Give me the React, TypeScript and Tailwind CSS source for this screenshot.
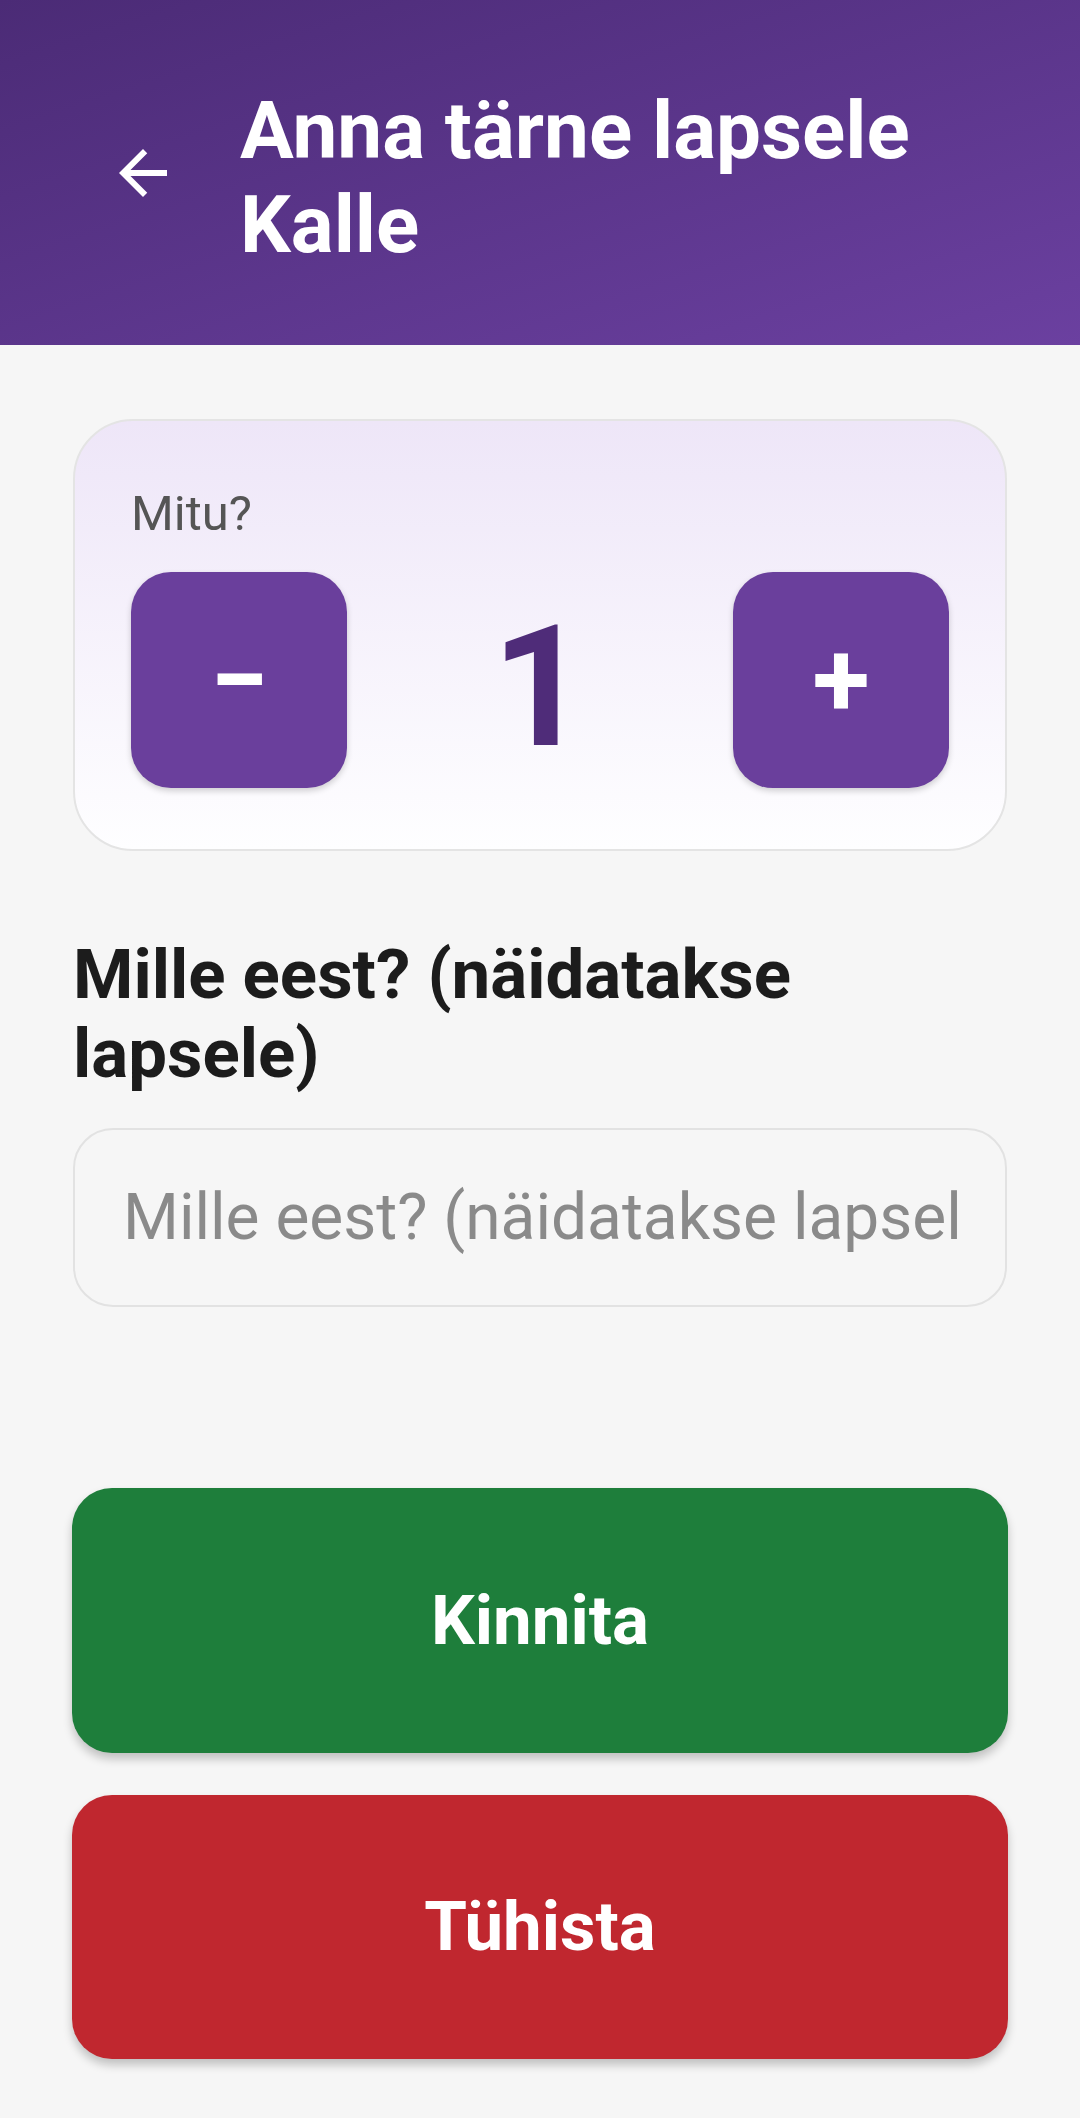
export default function App() {
  return (
    <div className="min-h-screen bg-[#f6f6f6] font-['Roboto',sans-serif]">
      {/* Header */}
      <header className="h-[345px] bg-linear-to-br from-[#4b2b76] to-[#6b40a0] flex items-start pt-[84px]">
        <button
          type="button"
          className="ml-[107px] mt-[53px] w-[72px] h-[72px] shrink-0 text-white"
          title="Tagasi"
        >
          <svg viewBox="0 0 24 24" className="w-[72px] h-[72px]" fill="currentColor">
            <path d="M20 11H7.83l5.59-5.59L12 4l-8 8 8 8 1.41-1.41L7.83 13H20v-2z" />
          </svg>
        </button>
        <h1 className="ml-[61px] pr-[60px] text-[80px] leading-[94px] font-bold text-white">
          Anna tärne lapsele Kalle
        </h1>
      </header>

      <main className="px-[73px] pt-[74px] pb-[58px]">
        {/* Amount card */}
        <div className="border-2 border-[#e4e4e4] rounded-[60px] bg-linear-to-b from-[#eee6f8] to-[#fefeff] pt-[64px] pb-[61px] px-[56px]">
          <div className="text-[49px] leading-[57px] text-[#555555]">Mitu?</div>
          <div className="mt-[30px] flex items-center justify-between">
            <button
              type="button"
              className="w-[216px] h-[216px] rounded-[40px] bg-[#6a3f9c] text-white text-[105px] font-bold leading-none flex items-center justify-center shadow-[0_3px_6px_rgba(0,0,0,0.18)]"
            >
              −
            </button>
            <span className="mt-[16px] text-[168px] leading-none font-bold text-[#4f2c79]">1</span>
            <button
              type="button"
              className="w-[216px] h-[216px] rounded-[40px] bg-[#6a3f9c] text-white text-[105px] font-bold leading-none flex items-center justify-center shadow-[0_3px_6px_rgba(0,0,0,0.18)]"
            >
              +
            </button>
          </div>
        </div>

        {/* Reason */}
        <h2 className="mt-[84px] text-[69px] leading-[79px] font-bold text-[#1c1c1c]">
          Mille eest? (näidatakse lapsele)
        </h2>
        <input
          type="text"
          placeholder="Mille eest? (näidatakse lapsele)"
          className="mt-[35px] block w-full h-[179px] border-2 border-[#e2e2e2] rounded-[40px] bg-[#f6f6f6] pl-[48px] pr-[48px] text-[64px] text-[#1c1c1c] placeholder:text-[#8a8a8a] outline-none"
        />

        {/* Actions */}
        <div className="mt-[181px] -mx-[1px] flex flex-col gap-[42px]">
          <button
            type="button"
            className="h-[265px] rounded-[40px] bg-[#1e7e3b] text-white text-[69px] font-bold shadow-[0_6px_10px_rgba(0,0,0,0.22)]"
          >
            Kinnita
          </button>
          <button
            type="button"
            className="h-[264px] rounded-[40px] bg-[#c0272f] text-white text-[69px] font-bold shadow-[0_6px_10px_rgba(0,0,0,0.22)]"
          >
            Tühista
          </button>
        </div>
      </main>
    </div>
  )
}
